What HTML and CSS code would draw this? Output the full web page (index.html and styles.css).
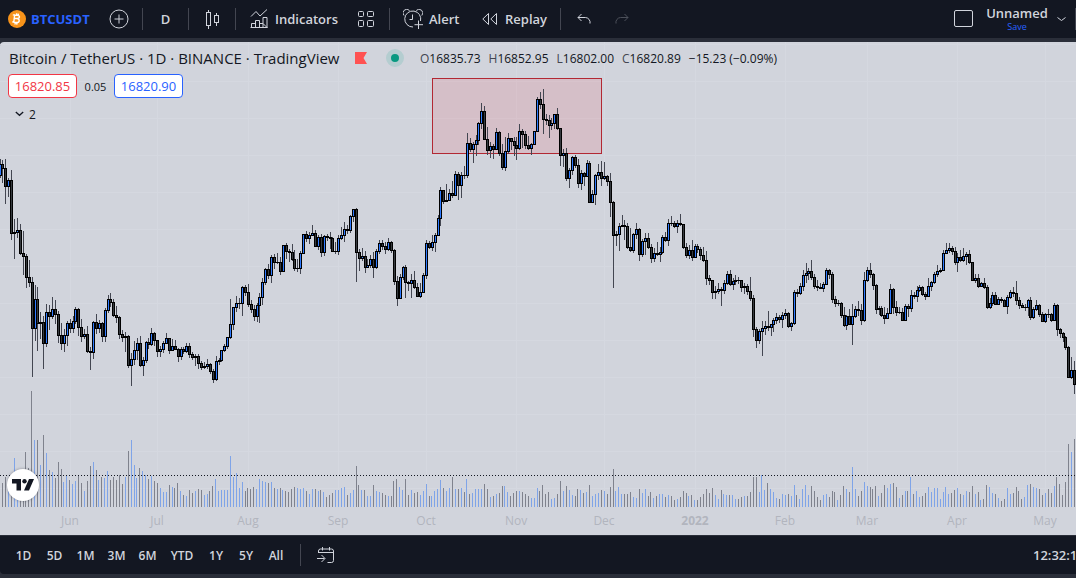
FILE: index.html
```html
<!DOCTYPE html>
<html lang="en">
<head>
<meta charset="utf-8">
<title>BTCUSDT</title>
<link rel="stylesheet" href="styles.css">
</head>
<body>
<header class="toolbar">
  <button class="tool symbol">
    <svg width="18" height="18" viewBox="0 0 18 18"><circle cx="9" cy="9" r="9" fill="#f7931a"/><path d="M6.700 4.400l-1 8.400M4.800 4.900l4.600.5c3 .4 2.600 3.300-.4 3.100l-2.500-.2M4.200 11.900l4.200.6c3.600.4 3.600-3.500.6-4M8.700 3.300l-.3 2M10.400 3.600l-.3 2M7.300 12.500l-.3 2M9 12.700l-.3 2" fill="none" stroke="#fff" stroke-width="1.4"/></svg>
    <span>BTCUSDT</span>
  </button>
  <button class="tool icon" aria-label="Compare symbols">
    <svg width="20" height="20" viewBox="0 0 20 20" class="line"><circle cx="10" cy="10" r="9"/><path d="M5.500 10h9M10 5.500v9"/></svg>
  </button>
  <i class="sep"></i>
  <button class="tool interval">D</button>
  <i class="sep"></i>
  <button class="tool icon" aria-label="Chart type">
    <svg width="16" height="20" viewBox="0 0 16 20" class="line crisp"><path d="M2.500 3.500h4v13h-4zM4.500.500v3M4.500 16.500v3M10.500 6.500h4v7h-4zM12.500 3.500v3M12.500 13.500v3"/></svg>
  </button>
  <i class="sep"></i>
  <button class="tool indicators">
    <svg width="18" height="20" viewBox="0 0 18 20" class="line"><path d="M1 7.500l5-5 4 4.500 7-6.500M1.500 18.500v-4h4v4M5.500 18.500v-7h4v7M9.500 14.500h3.500v4M13 14.500v-6h4v10zM.500 18.500h17"/></svg>
    <span>Indicators</span>
  </button>
  <button class="tool icon" aria-label="Indicator templates">
    <svg width="16" height="16" viewBox="0 0 16 16" class="line"><rect x=".5" y=".5" width="5" height="5" rx="1"/><rect x="9.500" y=".5" width="6" height="5" rx="1"/><rect x=".5" y="9.500" width="5" height="6" rx="1"/><rect x="9.500" y="9.500" width="6" height="6" rx="1"/></svg>
  </button>
  <i class="sep"></i>
  <button class="tool alert">
    <svg width="20" height="20" viewBox="0 0 20 20" class="line"><path d="M10 18a8 8 0 1 1 7.500-6M1 6.500A3.500 3.500 0 0 1 6.500 1.500M18.800 6.500A3.500 3.500 0 0 0 13.300 1.500M9.500 5.500v5h-3M15.500 11.500v8.500M11.500 15.700H20"/></svg>
    <span>Alert</span>
  </button>
  <button class="tool replay">
    <svg width="16" height="14" viewBox="0 0 16 14" class="line"><path d="M6.500 1.500v11L.8 7zM14.500 1.500v11L8.800 7z"/></svg>
    <span>Replay</span>
  </button>
  <i class="sep"></i>
  <button class="tool history first" aria-label="Undo">
    <svg width="14" height="12" viewBox="0 0 14 12" class="line"><path d="M4.500 1L1 4.500 4.500 8M1 4.500h7.500a5 5 0 0 1 4.500 6"/></svg>
  </button>
  <button class="tool history" aria-label="Redo" disabled>
    <svg width="14" height="12" viewBox="0 0 14 12" class="line"><path d="M9.500 1L13 4.500 9.500 8M13 4.500H5.500a5 5 0 0 0-4.500 6"/></svg>
  </button>
  <span class="spacer"></span>
  <button class="tool icon" aria-label="Select layout">
    <svg width="20" height="18" viewBox="0 0 20 18" class="line"><rect x=".5" y=".5" width="18" height="16" rx="1.500"/></svg>
  </button>
  <button class="tool layout"><span>Unnamed</span><small>Save</small></button>
  <button class="tool more" aria-label="Manage layouts">
    <svg width="9" height="5" viewBox="0 0 9 5" class="line"><path d="M.500.500l4 3 4-3"/></svg>
  </button>
  <i class="sep"></i>
</header>

<main class="chart">
  <svg class="plot" id="plot" role="img" aria-label="BTCUSDT daily candles and volume"></svg>
  <section class="legend">
    <div class="title-row">
      <h1>Bitcoin / TetherUS · 1D · BINANCE · TradingView</h1>
      <svg class="flag" width="12" height="12" viewBox="0 0 12 12"><path d="M0 0h12L8.500 6l3.500 6H0z" fill="#ff5252"/></svg>
      <i class="status"></i>
      <p class="ohlc"><span>O<b>16835.73</b></span><span>H<b>16852.95</b></span><span>L<b>16802.00</b></span><span>C<b>16820.89</b></span><span><b>−15.23 (−0.09%)</b></span></p>
    </div>
    <div class="quote-row">
      <button class="quote sell">16820.85</button>
      <span class="spread">0.05</span>
      <button class="quote buy">16820.90</button>
    </div>
    <button class="collapse">
      <svg width="9" height="6" viewBox="0 0 9 6"><path d="M.8 1l3.700 3.300L8.200 1" fill="none" stroke="#131722" stroke-width="1.300"/></svg>
      <span>2</span>
    </button>
  </section>
  <a class="brand" href="#" aria-label="TradingView">
    <svg width="22" height="12" viewBox="0 0 22 12" fill="#131722"><path d="M0 0h9v11.500H4.500V4.500H0zM17 0h5l-5 11.500h-5z"/><circle cx="12.500" cy="2.300" r="2.200"/></svg>
  </a>
</main>

<footer class="ranges">
  <button>1D</button><button>5D</button><button>1M</button><button>3M</button><button>6M</button><button class="wide">YTD</button><button>1Y</button><button>5Y</button><button>All</button>
  <i class="sep"></i>
  <button class="goto" aria-label="Go to date">
    <svg width="18" height="17" viewBox="0 0 18 17" class="line"><path d="M1.500 6V4a2 2 0 0 1 2-2h11a2 2 0 0 1 2 2v9.500a2 2 0 0 1-2 2h-4M1.500 5.500h15M5.500 0v3.500M12.500 0v3.500M0 11.500h7.500M4.500 8l3.500 3.500L4.500 15"/></svg>
  </button>
  <span class="spacer"></span>
  <button class="clock">12:32:1</button>
</footer>
<script src="chart.js"></script>
</body>
</html>
```

FILE: styles.css
```css
* { box-sizing: border-box; }
body {
  margin: 0;
  height: 100vh;
  display: flex;
  flex-direction: column;
  background: #2a2e39;
  padding-bottom: 4px;
  overflow: hidden;
  font-family: "Trebuchet MS", "Open Sans", "Noto Sans", sans-serif;
  font-size: 13px;
  color: #131722;
}
button {
  font: inherit;
  color: inherit;
  border: 0;
  background: none;
  padding: 0;
  white-space: nowrap;
}
svg { display: block; flex: none; }
.line { fill: none; stroke: #d1d4dc; stroke-width: 1; }
.crisp { shape-rendering: crispEdges; }
.spacer { flex: 1; }
.sep { width: 1px; height: 22px; background: #434651; flex: none; }

.toolbar {
  flex: none;
  height: 38px;
  margin-bottom: 4px;
  display: flex;
  align-items: center;
  background: #131722;
  color: #d1d4dc;
  font-weight: 600;
}
.tool { height: 38px; display: flex; align-items: center; flex: none; }
.symbol { width: 96px; padding-left: 8px; gap: 5px; color: #2962ff; font-weight: 700; }
.icon { width: 46px; justify-content: center; }
.interval { width: 45px; justify-content: center; }
.indicators { width: 107px; padding-left: 14px; gap: 7px; }
.alert { width: 78px; padding-left: 13px; gap: 6px; }
.replay { width: 92px; padding-left: 14px; gap: 7px; }
.history { width: 38px; justify-content: center; }
.history.first { margin-left: 4px; }
.history:disabled { opacity: .3; }
.layout { width: 60px; flex-direction: column; justify-content: center; line-height: 15px; }
.layout small { font-size: 9px; line-height: 12px; font-weight: 400; color: #2962ff; }
.more { width: 28px; justify-content: center; }

.chart {
  flex: 1;
  min-height: 0;
  position: relative;
  overflow: hidden;
  background: #d1d4dc;
  border-top-left-radius: 4px;
}
.plot { width: 100%; height: 100%; shape-rendering: crispEdges; }
.grid { fill: #d5d8e0; }
.zone { fill: rgba(242, 54, 69, .13); stroke: #b22833; }
.wick { fill: #434651; }
.body { fill: #000; }
.up { fill: #2f7bff; }
.down { fill: #363a3f; }
.vol-up { fill: #7fa4e8; }
.vol-down { fill: #7f828d; }
.average { stroke: #131722; stroke-dasharray: 1 2; }
.month { fill: #b2b5be; font-size: 12px; text-anchor: middle; }
.year { font-weight: 700; }

.legend {
  position: absolute;
  top: 5px;
  left: 8px;
  display: flex;
  flex-direction: column;
  align-items: flex-start;
}
.title-row { display: flex; align-items: center; height: 22px; white-space: nowrap; }
.title-row h1 { margin: 0; width: 347px; padding-left: 1px; font-size: 15px; font-weight: 400; }
.status {
  width: 18px;
  height: 18px;
  margin: 0 16px 0 19px;
  border: 5px solid #b4cdd0;
  border-radius: 50%;
  background: #089981;
}
.ohlc { margin: 0; display: flex; gap: 8px; font-size: 12px; color: #434651; }
.ohlc b { font-weight: 400; color: #131722; }
.quote-row { display: flex; align-items: center; margin-top: 5px; }
.quote { width: 69px; height: 24px; border: 1px solid; border-radius: 4px; background: #fff; }
.sell { color: #f23645; }
.buy { color: #2962ff; }
.spread { width: 37px; text-align: center; font-size: 11px; }
.collapse { display: flex; align-items: center; gap: 5px; height: 20px; margin-top: 6px; padding-left: 7px; font-size: 12px; }
.brand {
  position: absolute;
  left: 7px;
  bottom: 34px;
  width: 32px;
  height: 32px;
  display: grid;
  place-items: center;
  border-radius: 50%;
  background: #fff;
  box-shadow: 0 0 3px rgba(19, 23, 34, .4);
}

.ranges {
  flex: none;
  height: 39px;
  padding-left: 8px;
  display: flex;
  align-items: center;
  background: #131722;
  color: #d1d4dc;
  border-top: 1px solid #2a2e39;
  border-bottom-left-radius: 4px;
  font-size: 12px;
  font-weight: 600;
}
.ranges button { width: 31px; height: 30px; text-align: center; flex: none; }
.ranges .wide { width: 38px; }
.ranges .wide ~ button { width: 30px; }
.ranges .sep { margin-left: 9px; }
.ranges button.goto { width: 50px; display: grid; place-items: center; }
.ranges button.clock { width: 43px; overflow: hidden; text-align: left; font-size: 13px; }
```

FILE: chart.js
```js
// Candle values are [high, low, close] in thirds of a pixel below each segment's top.
const SEGMENTS = [
  { top: 108, rows: [
    [27,83,43],[30,98,55],[27,161,109],[85,140,91],[60,269,249],[207,326,247],[205,263,241],[222,315,310],[243,374,319],[312,413,382],
    [330,410,397],[381,681,535],[405,572,448],[411,602,520],[486,567,517],[498,656,580],[462,590,487],[465,540,499],[441,507,478],[450,522,493],
    [484,578,556],[519,599,580],[538,605,556],[514,587,520],[507,548,535],[498,548,514],[471,522,478],[475,557,532],[507,575,559],[538,567,553],
    [528,608,604],[591,659,607],[513,626,517],[492,551,535],[511,548,520],[516,575,559],[475,575,481],[436,488,448],[429,470,457],[447,500,496],
    [468,518,502],[498,567,553],[540,575,562],[547,605,559],[556,653,646],[610,708,628],[574,644,601],[565,629,580],[558,652,646],[622,677,631],
    [574,638,577],[565,597,583],[534,587,550],[546,588,571],[570,620,604],[588,620,598],[573,608,580],[549,583,565],[565,611,601],[567,602,589],
    [571,601,598],[594,635,619],[590,629,598],[592,611,604],[579,608,589],[580,623,613],[607,629,622],[613,647,619],[613,656,640]] },
  { top: 148, rows: [
    [514,539,532],[517,536,529],[507,536,523],[519,551,544],[537,578,568],[498,572,514],[504,524,511],[480,517,481],[462,486,469],[440,477,442],
    [327,447,403],[350,419,352],[318,365,340],[324,357,340],[288,377,292],[285,317,307],[282,350,343],[330,368,358],[345,392,379],[339,396,346],
    [309,399,322],[264,345,277],[234,284,238],[222,266,256],[195,279,202],[192,236,217],[189,222,217],[202,254,244],[165,246,166],[160,206,184],
    [177,215,187],[162,213,208],[180,243,235],[207,246,235],[183,251,190],[132,191,133],[123,155,145],[126,162,136],[105,137,130],[120,170,169],
    [136,180,142],[132,201,187],[135,197,139],[132,153,142],[126,176,145],[141,186,184],[156,191,184],[136,195,145],[110,150,136],[96,157,118],
    [105,131,121],[74,128,79],[56,96,58],[54,276,187],[178,243,205],[174,212,199],[183,248,232],[207,234,226],[195,234,208],[186,264,232],
    [177,237,184],[150,191,160],[151,180,169],[157,191,178],[144,182,157]] },
  { top: 38, rows: [
    [484,518,511],[507,614,604],[588,678,655],[582,657,592],[559,599,562],[555,653,607],[603,632,610],[582,653,601],[573,628,622],[610,652,649],
    [610,654,637],[579,639,586],[480,596,490],[483,506,502],[465,512,487],[459,516,466],[405,468,415],[321,437,331],[330,372,364],[312,366,361],
    [328,363,340],[303,354,346],[273,348,283],[276,359,316],[277,353,286],[258,296,287],[159,293,190],[174,216,208],[186,249,193],[165,228,181],
    [126,195,130],[69,146,94],[78,180,178],[141,224,211],[186,233,199],[192,236,208],[144,210,157],[153,228,220],[192,270,262],[172,272,214],
    [159,221,175],[175,209,184],[171,227,196],[171,239,205],[132,210,154],[148,203,163],[154,207,196],[168,210,205],[190,224,193],[153,195,154],
    [51,156,58],[36,86,73],[27,161,118],[102,135,121],[105,173,136],[114,150,130],[102,147,103],[84,150,145],[144,258,226],[208,261,220],
    [204,302,295],[264,324,271],[228,284,232],[226,263,256],[238,323,310]] },
  { top: 98, rows: [
    [91,150,100],[95,137,109],[60,111,70],[63,189,187],[151,188,163],[102,194,106],[72,119,97],[63,137,115],[67,120,109],[106,137,124],
    [99,230,187],[183,443,286],[273,318,283],[249,333,259],[225,261,256],[240,300,259],[249,326,322],[264,336,331],[279,338,283],[249,296,268],
    [264,362,343],[297,350,304],[279,345,295],[279,327,322],[312,369,355],[324,365,340],[306,349,343],[321,365,337],[284,341,292],[276,306,301],
    [237,317,250],[228,258,251],[243,264,259],[240,279,250],[222,258,253],[253,326,322],[309,354,346],[315,356,331],[300,363,352],[312,354,319],
    [312,340,328],[321,360,346],[321,366,361],[333,434,415],[405,434,421],[420,476,457],[438,476,454],[429,461,448],[441,498,451],[420,461,430],
    [393,435,403],[390,438,433],[414,450,424],[405,435,421],[411,432,422],[420,455,442],[429,461,439],[432,465,454],[411,483,475],[465,591,568],
    [561,624,601],[567,611,574],[543,648,565],[543,584,559],[513,572,562],[552,588,553],[535,576,541],[519,551,532],[525,548,538],[516,563,526],
    [507,536,520],[516,563,559]] },
  { top: 188, rows: [
    [276,302,280],[181,285,187],[177,201,190],[159,195,169],[120,183,136],[99,158,130],[114,149,124],[90,149,142],[132,176,169],[150,182,172],
    [159,177,175],[156,186,163],[114,164,121],[117,147,133],[127,218,208],[198,231,220],[210,228,220],[216,263,256],[231,290,286],[255,299,259],
    [237,285,283],[222,344,259],[228,265,238],[213,258,241],[222,285,271],[126,276,151],[111,155,121],[99,144,133],[130,179,166],[162,251,238],
    [228,255,235],[228,261,256],[231,282,265],[235,266,250],[162,251,178],[174,251,232],[213,258,247],[231,251,247],[234,273,271],[222,273,229],
    [223,260,235],[180,245,196],[186,207,199],[168,216,181],[165,186,172],[169,198,193],[186,209,199],[144,200,169],[153,182,157],[126,161,133],
    [105,141,124],[114,128,121],[61,123,70],[39,72,61],[39,69,55],[48,75,64],[51,105,97],[69,126,82],[60,96,91],[54,96,79],
    [66,105,73],[60,101,97],[96,153,151],[132,159,145],[132,173,169],[156,170,160],[144,177,172],[165,236,232],[204,236,220],[186,227,196],
    [186,225,223],[201,225,208],[201,219,211],[207,231,229],[195,252,202],[180,206,187],[171,201,190],[153,224,211],[201,237,226],[219,234,232],
    [222,243,232],[207,258,211],[201,269,262],[231,267,238],[210,242,226],[222,260,253],[246,277,274],[249,278,253],[237,264,254],[249,275,271],
    [219,273,226],[222,318,298],[294,324,310],[306,336,322],[318,359,352],[348,444,442],[381,447,421],[393,492,463]] }
];

// Volume bar tops, in thirds of a pixel, measured against each group's base.
const VOLUMES = [
  { base: 381, tops: [
    320,309,291,333,300,234,310,300,290,216,264,33,180,180,255,165,219,270,276,294,246,267,306,288,300,312,303,285,309,333,
    303,258,246,270,300,291,294,273,300,291,300,285,312,291,213,180,255,294,264,273,285,297,288,303,309,324,336,336,315,321,
    324,309,333,345,348,330,339,333,327,330,345,342,333,318,297,333,330,330,330,228,291,279,324,306,333,324,327,321,327,297,
    303,306,309,306,324,327,324,330,333,336,327,321,324,327,324,333,342,327,327,333,330,336,351,345,339,330,330,324,321,345] },
  { base: 201, tops: [
    159,150,78,135,150,150,168,168,135,153,156,159,165,168,168,123,117,141,150,117,165,150,159,156,165,153,132,168,168,153,
    147,120,144,153,144,111,147,147,144,156,117,162,159,147,147,147,132,147,171,168,162,159,138,138,156,168,159,153,153,156,
    162,168,174,174,144,153,135,162,156,177,174,162,123,153,138,150,165,168,147,150,159,156,135,168,162,159,150,153,162,141,
    87,153,141,162,162,162,156,171,174,147,159,147,168,156,174,168,162,162,171,165,168,180,177,171,153,159,168,165,180,180] },
  { base: 231, tops: [
    201,192,177,189,174,195,207,180,192,195,195,195,207,207,201,198,198,186,141,141,186,135,180,159,177,186,204,207,192,195,
    192,198,165,195,207,177,165,195,168,183,201,210,195,192,201,183,186,210,195,168,177,186,111,177,198,183,156,168,171,177,
    168,198,189,165,174,162,159,171,204,195,183,183,141,192,183,201,198,189,171,186,174,174,207,186,171,192,189,180,174,192,
    195,183,186,168,192,186,210,207,165,171,189,192,204,213,207,174,192,189,171,183,207,201,165,162,171,174,177,195,189,177,
    189,168,141,162,195,156,42,66,27] }
];

const MONTHS = [["Jun",24],["Jul",54],["Aug",85],["Sep",116],["Oct",146],["Nov",177],["Dec",207],["2022",238],["Feb",269],["Mar",297],["Apr",328],["May",358]];
const STEP = 2.9205;
const VOLUME_FLOOR = 465;

const plot = document.getElementById("plot");
function add(name, attrs, text) {
  const el = document.createElementNS("http://www.w3.org/2000/svg", name);
  for (const key in attrs) el.setAttribute(key, attrs[key]);
  if (text) el.textContent = text;
  plot.appendChild(el);
}
function bar(cls, x, y, width, height) {
  if (height > 0) add("rect", { class: cls, x, y, width, height });
}

for (let y = 2; y < VOLUME_FLOOR; y += 37) add("rect", { class: "grid", x: 0, y, width: "100%", height: 1 });
for (const [label, index] of MONTHS) {
  const x = Math.floor(index * STEP);
  bar("grid", x, 0, 1, VOLUME_FLOOR);
  add("text", { class: label === "2022" ? "month year" : "month", x, y: 483 }, label);
}

const candles = [];
for (const { top, rows } of SEGMENTS)
  for (const [high, low, close] of rows)
    candles.push({ high: top + Math.round(high / 3), low: top + Math.round(low / 3), close: top + Math.floor(close / 3), value: top + close / 3 });
const heights = VOLUMES.flatMap(({ base, tops }) => tops.map(t => Math.round((base - t) / 3)));

let previous = { close: 133, value: 133.4 };
for (const [i, c] of candles.entries()) {
  c.open = previous.close;
  c.rising = c.value <= previous.value + 0.1;
  previous = c;
  bar(c.rising ? "vol-up" : "vol-down", Math.floor(i * STEP - 0.3), VOLUME_FLOOR - heights[i], 1, heights[i]);
}
add("line", { class: "average", x1: 0, x2: "100%", y1: 433.5, y2: 433.5 });
add("rect", { class: "zone", x: 432.5, y: 36.5, width: 169, height: 75 });
for (const [i, c] of candles.entries()) {
  const x = Math.floor(i * STEP);
  bar("wick", x, c.high, 1, c.low - c.high);
}
for (const [i, c] of candles.entries()) {
  const x = Math.floor(i * STEP);
  const top = Math.min(c.open, c.close);
  const size = Math.abs(c.open - c.close) + 1;
  bar("body", x - 1, top, 3, size);
  bar(c.rising ? "up" : "down", x, top + 1, 1, size - 2);
}
```
